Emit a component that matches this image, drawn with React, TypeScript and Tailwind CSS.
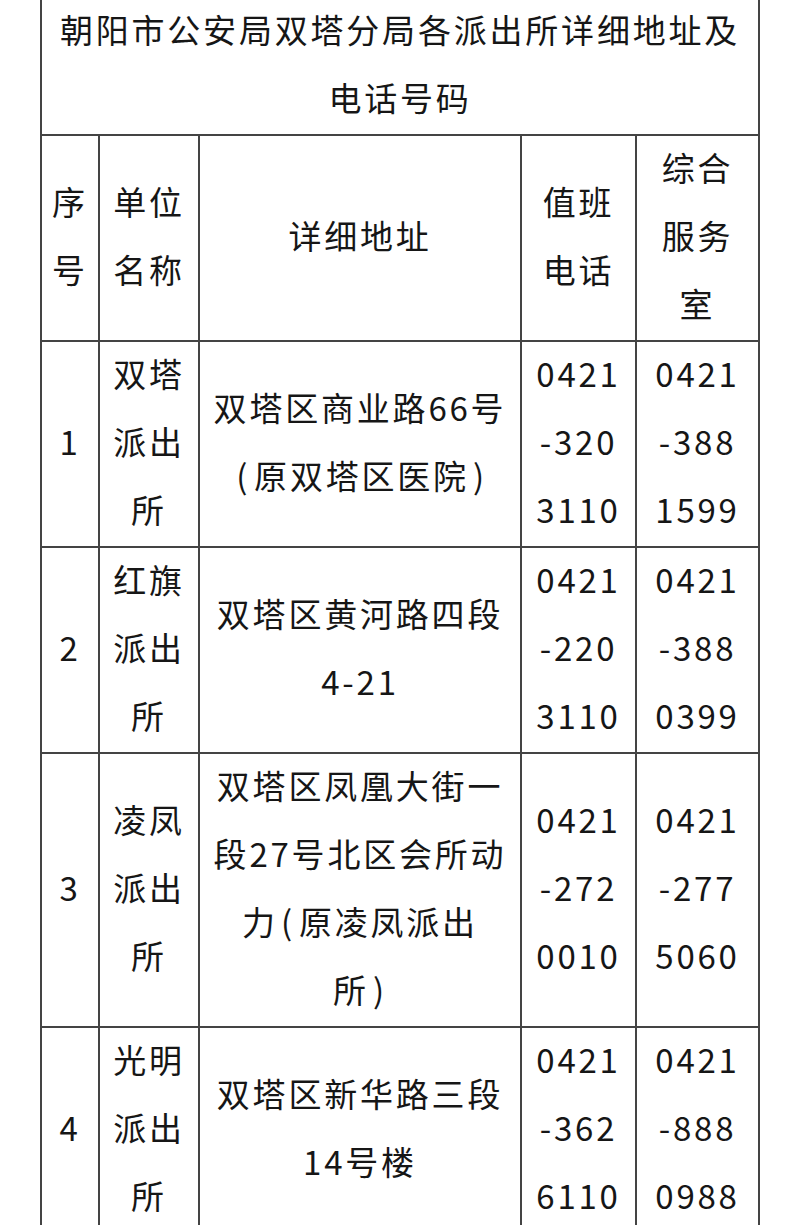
const rows = [
  {
    no: "1",
    name: ["双塔", "派出", "所"],
    addr: ["双塔区商业路66号", "(原双塔区医院)"],
    duty: ["0421", "-320", "3110"],
    office: ["0421", "-388", "1599"],
  },
  {
    no: "2",
    name: ["红旗", "派出", "所"],
    addr: ["双塔区黄河路四段", "4-21"],
    duty: ["0421", "-220", "3110"],
    office: ["0421", "-388", "0399"],
  },
  {
    no: "3",
    name: ["凌凤", "派出", "所"],
    addr: ["双塔区凤凰大街一", "段27号北区会所动", "力(原凌凤派出", "所)"],
    duty: ["0421", "-272", "0010"],
    office: ["0421", "-277", "5060"],
  },
  {
    no: "4",
    name: ["光明", "派出", "所"],
    addr: ["双塔区新华路三段", "14号楼"],
    duty: ["0421", "-362", "6110"],
    office: ["0421", "-888", "0988"],
  },
];

// parens in the source sit a little wider than the font's half-width ones
function Line({ text }: { text: string }) {
  const parts = text.split(/([()])/);
  return (
    <div className="h-[68px] leading-[62px] whitespace-nowrap">
      {parts.map((p, i) =>
        p === "(" ? (
          <span key={i} className="pl-[3px] pr-[4px]">(</span>
        ) : p === ")" ? (
          <span key={i} className="pl-[4px]">)</span>
        ) : (
          <span key={i}>{p}</span>
        )
      )}
    </div>
  );
}

function Cell({ lines }: { lines: string[] }) {
  return (
    <div className="flex flex-col items-center justify-center text-center border-r-2 border-b-2 border-[#444444]">
      {lines.map((l, i) => (
        <Line key={i} text={l} />
      ))}
    </div>
  );
}

export default function App() {
  return (
    <div className="h-[1225px] w-[800px] overflow-hidden bg-white">
      <div className="ml-[40px] mt-[-2px] w-[720px] border-l-2 border-[#444444] grid grid-cols-[58px_100px_322px_115px_123px] text-[33px] tracking-[2.8px] text-[#161616] font-['Noto_Sans_CJK_SC','Noto_Sans',sans-serif]">
        <div className="col-span-5 flex flex-col items-center justify-center text-center border-r-2 border-b-2 border-[#444444]">
          <Line text="朝阳市公安局双塔分局各派出所详细地址及" />
          <Line text="电话号码" />
        </div>

        <Cell lines={["序", "号"]} />
        <Cell lines={["单位", "名称"]} />
        <Cell lines={["详细地址"]} />
        <Cell lines={["值班", "电话"]} />
        <Cell lines={["综合", "服务", "室"]} />

        {rows.map((r) => (
          <>
            <Cell key={r.no + "a"} lines={[r.no]} />
            <Cell key={r.no + "b"} lines={r.name} />
            <Cell key={r.no + "c"} lines={r.addr} />
            <Cell key={r.no + "d"} lines={r.duty} />
            <Cell key={r.no + "e"} lines={r.office} />
          </>
        ))}
      </div>
    </div>
  );
}
